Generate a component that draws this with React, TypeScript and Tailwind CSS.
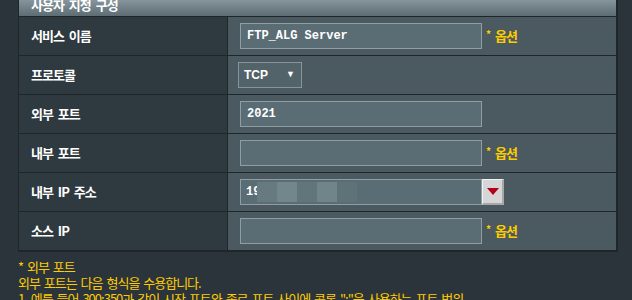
import React from "react";

const KR = { fontFamily: '"Noto Sans CJK KR", "Noto Sans", sans-serif', wordSpacing: "3px" };
const MONO = { fontFamily: '"Liberation Mono", monospace' };

function Optional() {
  return (
    <span className="ml-[4px] text-[13px] font-bold tracking-[-1px] text-[#ffcc00]" style={KR}>
      <span className="text-[10px] align-top">*</span> 옵션
    </span>
  );
}

function TextInput({ value }: { value?: string }) {
  return (
    <div
      className="flex h-[26px] w-[242px] items-center border border-[#909ea3] bg-[#5a6d74] pl-[6px] text-[12px] font-bold text-white"
      style={MONO}
    >
      {value}
    </div>
  );
}

function Row({ label, children }: { label: React.ReactNode; children: React.ReactNode }) {
  return (
    <div className="flex h-[39px] border-b border-[#1f2629]">
      <div
        className="flex w-[209px] items-center border-r border-[#1f2629] bg-[#2f3a40] pl-[12px] text-[13px] font-bold tracking-[-1px] text-white"
        style={KR}
      >
        {label}
      </div>
      <div className="flex flex-1 items-center bg-[#4a5a60] pl-[12px]">{children}</div>
    </div>
  );
}

export default function App() {
  return (
    <div className="h-[300px] w-[632px] overflow-hidden bg-[#2b343a]">
      <div className="ml-[18px] -mt-[6px] w-[600px] border-l border-r-2 border-b border-[#1f2629]">
        <div
          className="flex h-[23px] items-center border-b border-[#1f2629] bg-gradient-to-b from-[#95a5ab] to-[#5e6d73] pl-[12px] text-[13px] font-bold tracking-[-1px] text-white"
          style={KR}
        >
          사용자 지정 구성
        </div>
        <Row label="서비스 이름">
          <TextInput value="FTP_ALG Server" />
          <Optional />
        </Row>
        <Row label="프로토콜">
          <div
            className="-ml-[2px] flex h-[26px] w-[64px] items-center justify-between border border-[#87959a] bg-[#52636a] pl-[5px] pr-[6px] text-[12px] font-bold text-white"
            style={{ fontFamily: '"Liberation Sans", Arial, sans-serif' }}
          >
            <span>TCP</span>
            <span className="text-[9px]">▼</span>
          </div>
        </Row>
        <Row label="외부 포트">
          <TextInput value="2021" />
        </Row>
        <Row label="내부 포트">
          <TextInput />
          <Optional />
        </Row>
        <Row label="내부 IP 주소">
          <div
            className="flex h-[26px] w-[242px] items-center border border-[#909ea3] bg-[#5a6d74] pl-[5px] text-[12px] font-bold text-white"
            style={MONO}
          >
            <span className="w-[11px] overflow-hidden whitespace-nowrap">19</span>
            <div className="flex h-[20px]">
              <div className="w-[20px] bg-[#667a80]" />
              <div className="w-[20px] bg-[#72868c]" />
              <div className="w-[20px] bg-[#62757b]" />
              <div className="w-[20px] bg-[#71848a]" />
              <div className="w-[20px] bg-[#5f7278]" />
            </div>
          </div>
          <div className="flex h-[26px] w-[22px] items-center justify-center border-t border-l border-b-2 border-r-2 border-t-[#f2f2f2] border-l-[#f2f2f2] border-b-[#a8a8a8] border-r-[#a8a8a8] bg-[#d6d6d6]">
            <svg width="12" height="7" viewBox="0 0 12 7">
              <polygon points="0,0 12,0 6,7" fill="#b5001a" />
            </svg>
          </div>
        </Row>
        <Row label="소스 IP">
          <TextInput />
          <Optional />
        </Row>
      </div>
      <div
        className="ml-[18px] mt-[7px] text-[13px] leading-[16px] tracking-[-1px] text-[#ffcc00]"
        style={{ fontFamily: '"Noto Sans CJK KR", "Noto Sans", sans-serif', wordSpacing: "2px" }}
      >
        <div>* 외부 포트</div>
        <div>외부 포트는 다음 형식을 수용합니다.</div>
        <div className="whitespace-nowrap">1. 예를 들어 300:350과 같이 시작 포트와 종료 포트 사이에 콜론 ":"을 사용하는 포트 범위 .</div>
      </div>
    </div>
  );
}
